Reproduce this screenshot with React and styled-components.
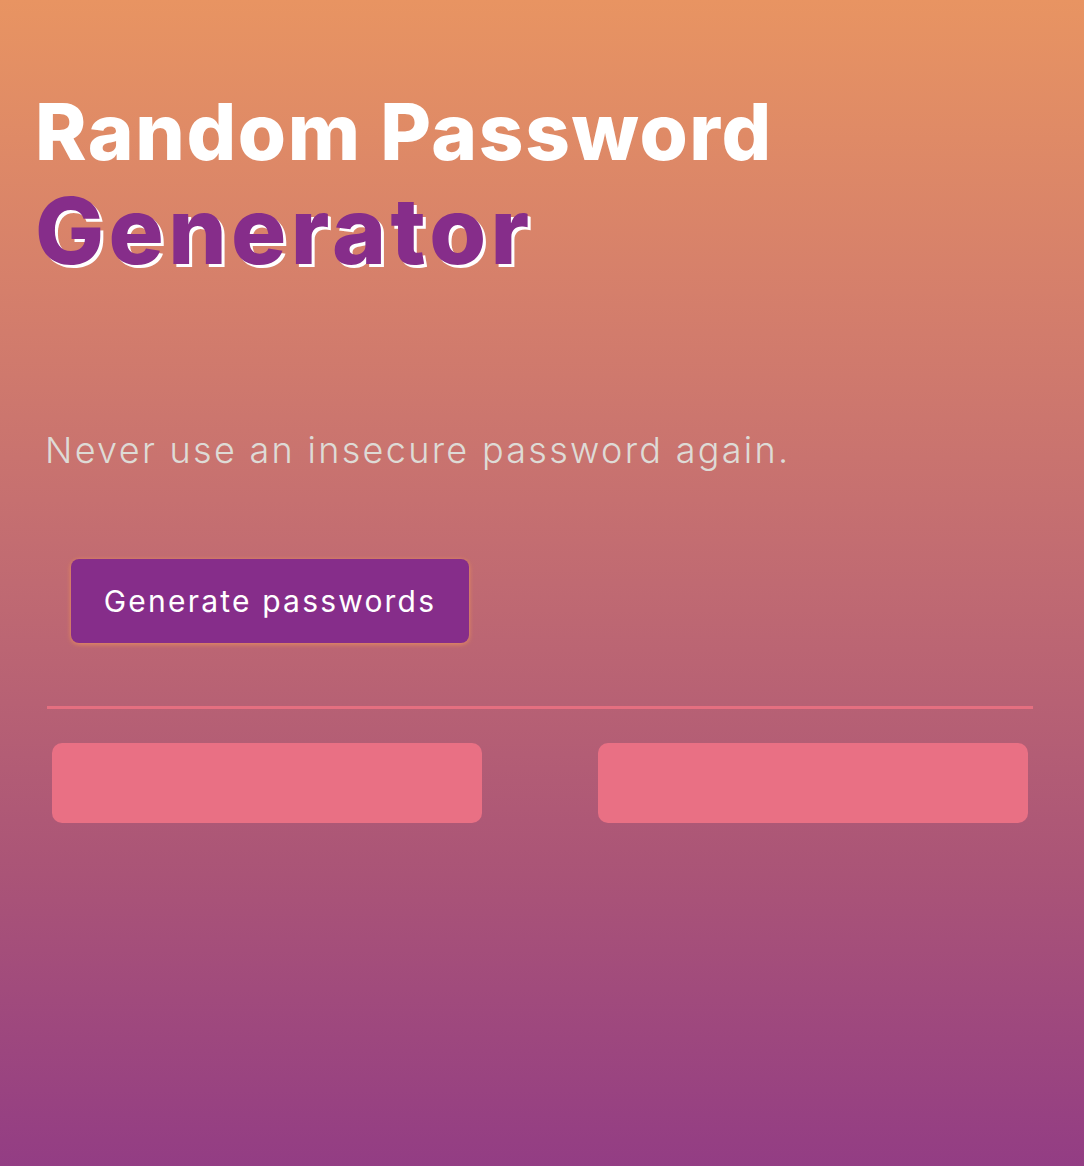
import styled, { createGlobalStyle } from "styled-components";

const GlobalStyle = createGlobalStyle`
  html, body {
    margin: 0;
    padding: 0;
  }
  body {
    font-family: "Inter", "Liberation Sans", sans-serif;
  }
`;

const App = () => {
  return (
    <Page>
      <GlobalStyle />
      <Title>
        Random Password
        <Highlight>Generator</Highlight>
      </Title>
      <Subtitle>Never use an insecure password again.</Subtitle>
      <GenerateButton>Generate passwords</GenerateButton>
      <Divider />
      <PasswordRow>
        <PasswordBox />
        <PasswordBox />
      </PasswordRow>
    </Page>
  );
};

export default App;

const Page = styled.main`
  box-sizing: border-box;
  min-height: 1166px;
  padding: 84px 51px 0 35px;
  display: flex;
  flex-direction: column;
  align-items: flex-start;
  background: linear-gradient(180deg, #e89462 0%, #d57f6b 25%, #c06a72 50%, #aa5477 75%, #933d84 100%);
`;

const Title = styled.h1`
  margin: 0;
  display: flex;
  flex-direction: column;
  color: #ffffff;
  font-size: 78px;
  font-weight: 800;
  line-height: 96px;
  letter-spacing: 1.6px;
`;

const Highlight = styled.span`
  color: #862d8a;
  font-size: 92px;
  line-height: 102px;
  letter-spacing: 4.4px;
  text-shadow: 3px 3px 0 #ffffff;
`;

const Subtitle = styled.p`
  margin: 144px 0 0 10px;
  color: #dedbd6;
  font-size: 36px;
  font-weight: 300;
  line-height: 48px;
  letter-spacing: 2.3px;
`;

const GenerateButton = styled.button`
  margin: 85px 0 0 36px;
  width: 398px;
  height: 84px;
  border: none;
  border-radius: 8px;
  background: #862d8a;
  color: #ffffff;
  font-family: inherit;
  font-size: 30px;
  font-weight: 400;
  letter-spacing: 2.2px;
  box-shadow: 0 1px 5px rgba(236, 146, 92, 0.95);
  cursor: pointer;
`;

const Divider = styled.hr`
  align-self: stretch;
  margin: 63px 0 0 12px;
  height: 3px;
  border: none;
  background: #e56f80;
`;

const PasswordRow = styled.div`
  align-self: stretch;
  display: flex;
  justify-content: space-between;
  margin: 34px 5px 0 17px;
`;

const PasswordBox = styled.div`
  width: 430px;
  height: 80px;
  border-radius: 10px;
  background: #e97084;
`;
